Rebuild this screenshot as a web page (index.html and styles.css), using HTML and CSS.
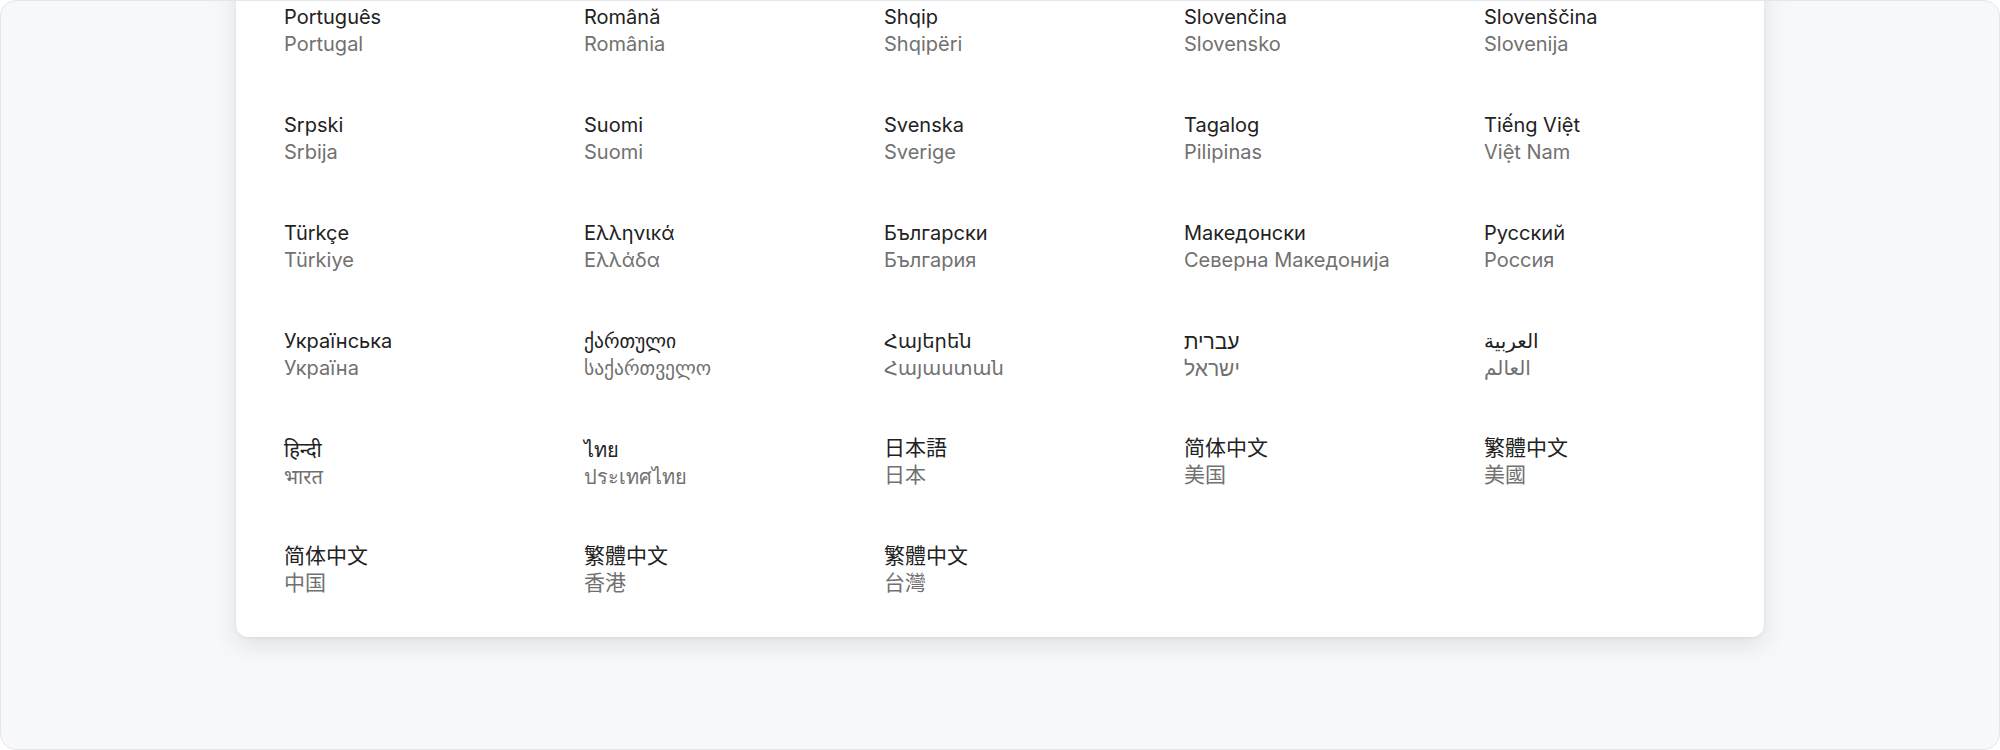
FILE: index.html
```html
<!DOCTYPE html>
<html lang="en">
<head>
<meta charset="utf-8">
<title>Languages</title>
<link rel="stylesheet" href="styles.css">
</head>
<body>
<div class="frame">
  <div class="card">
    <ul class="grid">
      <li class="item"><span class="name">Português</span><span class="region">Portugal</span></li>
      <li class="item"><span class="name">Română</span><span class="region">România</span></li>
      <li class="item"><span class="name">Shqip</span><span class="region">Shqipëri</span></li>
      <li class="item"><span class="name">Slovenčina</span><span class="region">Slovensko</span></li>
      <li class="item"><span class="name">Slovenščina</span><span class="region">Slovenija</span></li>

      <li class="item"><span class="name">Srpski</span><span class="region">Srbija</span></li>
      <li class="item"><span class="name">Suomi</span><span class="region">Suomi</span></li>
      <li class="item"><span class="name">Svenska</span><span class="region">Sverige</span></li>
      <li class="item"><span class="name">Tagalog</span><span class="region">Pilipinas</span></li>
      <li class="item"><span class="name">Tiếng Việt</span><span class="region">Việt Nam</span></li>

      <li class="item"><span class="name">Türkçe</span><span class="region">Türkiye</span></li>
      <li class="item"><span class="name">Ελληνικά</span><span class="region">Ελλάδα</span></li>
      <li class="item"><span class="name">Български</span><span class="region">България</span></li>
      <li class="item"><span class="name">Македонски</span><span class="region">Северна Македонија</span></li>
      <li class="item"><span class="name">Русский</span><span class="region">Россия</span></li>

      <li class="item"><span class="name">Українська</span><span class="region">Україна</span></li>
      <li class="item geo"><span class="name">ქართული</span><span class="region">საქართველო</span></li>
      <li class="item arm"><span class="name">Հայերեն</span><span class="region">Հայաստան</span></li>
      <li class="item heb"><span class="name">עברית</span><span class="region">ישראל</span></li>
      <li class="item ara"><span class="name">العربية</span><span class="region">العالم</span></li>

      <li class="item hin"><span class="name">हिन्दी</span><span class="region">भारत</span></li>
      <li class="item tha"><span class="name">ไทย</span><span class="region">ประเทศไทย</span></li>
      <li class="item cjk jp"><span class="name">日本語</span><span class="region">日本</span></li>
      <li class="item cjk sc"><span class="name">简体中文</span><span class="region">美国</span></li>
      <li class="item cjk tc"><span class="name">繁體中文</span><span class="region">美國</span></li>

      <li class="item cjk sc"><span class="name">简体中文</span><span class="region">中国</span></li>
      <li class="item cjk tc"><span class="name">繁體中文</span><span class="region">香港</span></li>
      <li class="item cjk tc"><span class="name">繁體中文</span><span class="region">台灣</span></li>
    </ul>
  </div>
</div>
</body>
</html>
```
FILE: styles.css
```css
html, body {
  margin: 0;
  padding: 0;
  background: #ffffff;
}

body {
  font-family: Inter, "Noto Sans", "DejaVu Sans", sans-serif;
}

.frame {
  box-sizing: border-box;
  width: 2000px;
  height: 750px;
  border: 1px solid #e4e6ea;
  border-radius: 16px;
  background: #f7f8fa;
  overflow: hidden;
}

.card {
  box-sizing: border-box;
  width: 1528px;
  margin: -40px auto 0;
  padding: 43px 48px 39px;
  background: #ffffff;
  border-radius: 12px;
  box-shadow: 0 8px 24px rgba(0, 0, 0, 0.10), 0 1px 3px rgba(0, 0, 0, 0.06);
}

.grid {
  list-style: none;
  margin: 0;
  padding: 0;
  display: grid;
  grid-template-columns: repeat(5, 300px);
  row-gap: 54px;
}

.item {
  display: flex;
  flex-direction: column;
  font-size: 20px;
  line-height: 27px;
}

.name {
  color: #222222;
}

.region {
  color: #717171;
}

.geo, .arm {
  font-family: "DejaVu Sans", sans-serif;
  font-size: 19.5px;
}

.heb {
  font-family: "Liberation Sans", "DejaVu Sans", sans-serif;
  font-size: 21px;
}

.ara {
  font-family: "DejaVu Sans", "Noto Sans", sans-serif;
  font-size: 20px;
}

.hin, .tha {
  font-family: "Noto Sans", "DejaVu Sans", sans-serif;
}

.cjk {
  font-size: 21px;
  margin-top: -3px;
  margin-bottom: 3px;
}

.jp {
  font-family: "Noto Sans CJK JP", sans-serif;
}

.sc {
  font-family: "Noto Sans CJK SC", sans-serif;
}

.tc {
  font-family: "Noto Sans CJK TC", sans-serif;
}
```
